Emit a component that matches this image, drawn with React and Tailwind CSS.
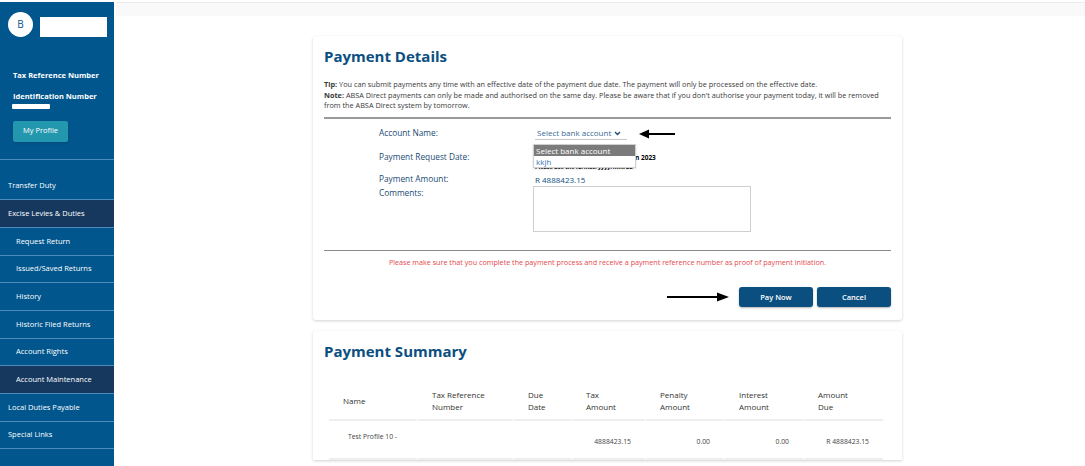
import React from "react";

const menu = [
  { label: "Transfer Duty" },
  { label: "Excise Levies & Duties", active: true },
  { label: "Request Return", sub: true },
  { label: "Issued/Saved Returns", sub: true },
  { label: "History", sub: true },
  { label: "Historic Filed Returns", sub: true },
  { label: "Account Rights", sub: true },
  { label: "Account Maintenance", sub: true, active: true },
  { label: "Local Duties Payable" },
  { label: "Special Links" },
];

// column widths taken from the header underline segments
const cols = [
  { label: "Name", w: "w-[88px]", span: "" },
  { label: "Tax Reference Number", w: "w-[95px]", span: "w-[62px]" },
  { label: "Due Date", w: "w-[57px]", span: "w-[24px]" },
  { label: "Tax Amount", w: "w-[73px]", span: "w-[36px]" },
  { label: "Penalty Amount", w: "w-[78px]", span: "w-[36px]" },
  { label: "Interest Amount", w: "w-[78px]", span: "w-[36px]" },
  { label: "Amount Due", w: "w-[79px]", span: "w-[36px]" },
];

function ArrowLeft() {
  return (
    <svg width="36" height="10" viewBox="0 0 36 10">
      <line x1="6" y1="5" x2="36" y2="5" stroke="#000" strokeWidth="2" />
      <polygon points="0,5 10,0.5 10,9.5" fill="#000" />
    </svg>
  );
}

function ArrowRight() {
  return (
    <svg width="62" height="10" viewBox="0 0 62 10">
      <line x1="0" y1="5" x2="54" y2="5" stroke="#000" strokeWidth="2" />
      <polygon points="62,5 50,0.5 50,9.5" fill="#000" />
    </svg>
  );
}

function Sidebar() {
  return (
    <div className="mt-[2px] flex h-[464px] w-[114px] shrink-0 flex-col bg-[#00568d] text-white">
      <div className="flex items-center gap-[7px] pl-[8px] pt-[10px]">
        <div className="flex h-[25px] w-[25px] items-center justify-center rounded-full bg-white text-[10px] text-[#00568d]">
          B
        </div>
        <div className="mt-[4px] h-[20px] w-[67px] bg-white" />
      </div>
      <div className="mt-[33px] pl-[13px] text-[7.5px] font-bold">Tax Reference Number</div>
      <div className="mt-[10px] pl-[13px] text-[7.5px] font-bold">Identification Number</div>
      <div className="ml-[12px] mt-[1px] h-[5px] w-[38px] rounded-[1px] bg-white" />
      <div className="ml-[13px] mt-[12px] flex h-[21px] w-[55px] items-center justify-center rounded-[2px] bg-[#2297ad] text-[7.5px] shadow-sm">
        My Profile
      </div>
      <div className="mt-[17px] border-b border-[#4d8bbb]" />
      <div className="h-[13px]" />
      {menu.map((m) => (
        <div
          key={m.label}
          className={`flex h-[27.7px] items-center border-b border-[#4d8bbb] text-[7.5px] ${
            m.active ? "bg-[#16375e]" : ""
          } ${m.sub ? "pl-[16px]" : "pl-[8px]"}`}
        >
          {m.label}
        </div>
      ))}
    </div>
  );
}

function PaymentDetails() {
  return (
    <div className="h-[284px] w-[589px] rounded-[3px] bg-white px-[11px] pt-[10px] shadow-[0_1px_3px_rgba(0,0,0,0.18)]">
      <h1 className="text-[15px] font-bold leading-[20px] text-[#0b4f80]">Payment Details</h1>
      <div className="mt-[13px] text-[7.3px] leading-[10.5px] text-[#3a3a3a]">
        <p>
          <span className="font-bold">Tip:</span> You can submit payments any time with an effective date of the payment due date. The payment will only be processed on the effective date.
        </p>
        <p>
          <span className="font-bold">Note:</span> ABSA Direct payments can only be made and authorised on the same day. Please be aware that if you don't authorise your payment today, it will be removed
          <br />
          from the ABSA Direct system by tomorrow.
        </p>
      </div>
      <div className="mt-[6px] h-[2px] bg-[#9a9a9a]" />

      <div className="relative pl-[55px] pt-[8px] text-[8.3px] text-[#1b4a73]">
        <div className="flex h-[14px] items-center">
          <div className="w-[156px]">Account Name:</div>
          <div className="flex items-center gap-[3px] border-b border-[#c8c8c8] pl-[2px] pr-[6px] text-[8px] text-[#3a6a96]">
            Select bank account
            <svg width="7" height="5" viewBox="0 0 7 5">
              <path d="M1 1 L3.5 3.5 L6 1" stroke="#1b4a73" strokeWidth="1.4" fill="none" />
            </svg>
          </div>
          <div className="ml-[12px]">
            <ArrowLeft />
          </div>
        </div>
        <div className="mt-[11px] flex h-[12px] items-center">
          <div className="w-[156px]">Payment Request Date:</div>
          <div className="pl-[100px] text-[6.5px] font-bold text-black">n 2023</div>
        </div>
        <div className="ml-[156px] h-[7px] text-[5.5px] font-bold leading-[7px] text-black">Please use the format: yyyy/mm/dd</div>
        <div className="mt-[3px] flex h-[12px] items-center">
          <div className="w-[156px]">Payment Amount:</div>
          <div className="text-[8px] text-[#0b4f80]">R 4888423.15</div>
        </div>
        <div className="flex">
          <div className="w-[154px] pt-[1px]">Comments:</div>
          <div className="h-[46px] w-[218px] border border-[#cfcfcf]" />
        </div>

        <div className="absolute left-[209px] top-[25px] w-[103px] border border-[#d0d0d0] bg-white text-[8px] shadow-[0_1px_2px_rgba(0,0,0,0.15)]">
          <div className="bg-[#7b7b7b] px-[2px] leading-[11px] text-white">Select bank account</div>
          <div className="px-[2px] leading-[11px] text-[#3a77b5]">kkjh</div>
        </div>
      </div>

      <div className="mt-[18px] h-[1px] bg-[#8a8a8a]" />
      <p className="mt-[6px] text-center text-[7.2px] text-[#e5484d]">
        Please make sure that you complete the payment process and receive a payment reference number as proof of payment initiation.
      </p>
      <div className="mt-[20px] flex items-center justify-end gap-[4px]">
        <div className="mr-[6px]">
          <ArrowRight />
        </div>
        <button className="h-[20px] w-[74px] rounded-[3px] bg-[#0b4f80] text-[7.5px] font-semibold text-white shadow-[0_1px_2px_rgba(0,0,0,0.3)]">
          Pay Now
        </button>
        <button className="h-[20px] w-[74px] rounded-[3px] bg-[#0b4f80] text-[7.5px] font-semibold text-white shadow-[0_1px_2px_rgba(0,0,0,0.3)]">
          Cancel
        </button>
      </div>
    </div>
  );
}

function PaymentSummary() {
  const row = ["Test Profile 10 -", "", "", "4888423.15", "0.00", "0.00", "R 4888423.15"];
  return (
    <div className="mt-[11px] w-[589px] rounded-t-[3px] bg-white px-[11px] pt-[10px] shadow-[0_1px_3px_rgba(0,0,0,0.18)]">
      <h2 className="text-[15px] font-bold leading-[20px] text-[#0b4f80]">Payment Summary</h2>
      <div className="ml-[5px] mt-[22px] text-[8px] text-[#333]">
        <div className="flex gap-[1px]">
          {cols.map((c) => (
            <div
              key={c.label}
              className={`${c.w} flex h-[38px] items-center border-b-2 border-[#eeeeee] pl-[14px] leading-[12px]`}
            >
              <span className={c.span}>{c.label}</span>
            </div>
          ))}
        </div>
        <div className="flex gap-[1px] text-[6.8px] text-[#444]">
          {cols.map((c, i) => (
            <div
              key={c.label}
              className={`${c.w} h-[39px] border-b-2 border-[#eeeeee] ${
                i === 0 ? "pl-[19px] pt-[11px]" : "pr-[14px] pt-[16px] text-right"
              }`}
            >
              {row[i]}
            </div>
          ))}
        </div>
      </div>
    </div>
  );
}

export default function App() {
  return (
    <div className="flex h-[466px] w-[1085px] overflow-hidden bg-white font-['Open_Sans','Liberation_Sans',sans-serif]">
      <Sidebar />
      <div className="flex-1">
        <div className="ml-[2px] mt-[2px] h-[14px] border-t border-[#ececec] bg-[#f9f9f9]" />
        <div className="pl-[199px] pt-[20px]">
          <PaymentDetails />
          <PaymentSummary />
        </div>
      </div>
    </div>
  );
}
